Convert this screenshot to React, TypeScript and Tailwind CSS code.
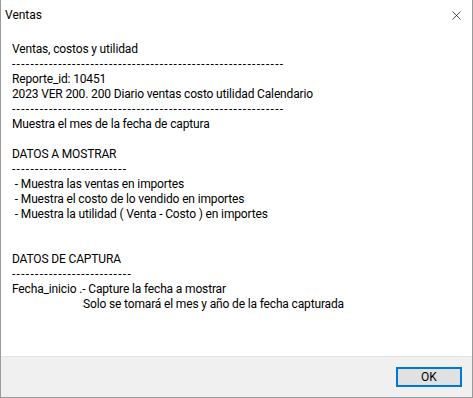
import { X } from "lucide-react";

const lines: { text: string; dash?: number; indent?: boolean }[] = [
  { text: "Ventas, costos y utilidad" },
  { text: "", dash: 59 },
  { text: "Reporte_id: 10451" },
  { text: "2023 VER 200. 200 Diario ventas costo utilidad Calendario" },
  { text: "", dash: 59 },
  { text: "Muestra el mes de la fecha de captura" },
  { text: "" },
  { text: "DATOS A MOSTRAR" },
  { text: "", dash: 25 },
  { text: " - Muestra las ventas en importes" },
  { text: " - Muestra el costo de lo vendido en importes" },
  { text: " - Muestra la utilidad ( Venta - Costo ) en importes" },
  { text: "" },
  { text: "" },
  { text: "DATOS DE CAPTURA" },
  { text: "", dash: 26 },
  { text: "Fecha_inicio .- Capture la fecha a mostrar" },
  { text: "Solo se tomará el mes y año de la fecha capturada", indent: true },
];

const App = () => {
  return (
    <div
      className="w-[473px] h-[398px] flex flex-col bg-white border-x border-b border-[#9a9a9a] text-[12px] text-black"
      style={{ fontFamily: 'Roboto, "Noto Sans", sans-serif' }}
    >
      {/* Title bar */}
      <div className="h-[30px] flex items-center justify-between pl-[4px] pr-[8px] shrink-0">
        <span className="leading-none">Ventas</span>
        <X size={15} strokeWidth={1.1} className="text-black" />
      </div>

      {/* Message */}
      <div className="flex-1 pl-[11px] pt-[12px] leading-[15px] tracking-[-0.15px]">
        {lines.map((l, i) => (
          <div
            key={i}
            className={
              "h-[15px] whitespace-pre " + (l.indent ? "pl-[71px]" : "")
            }
          >
            {l.dash ? (
              <span className="tracking-[1.3px]">{"-".repeat(l.dash)}</span>
            ) : (
              l.text
            )}
          </div>
        ))}
      </div>

      {/* Footer */}
      <div className="h-[41px] shrink-0 bg-[#f0f0f0] border-t border-[#e3e3e3] flex items-center justify-end pr-[10px]">
        <button className="w-[66px] h-[20px] border-2 border-[#0078d7] bg-[#e1e1e1] text-[12px] leading-none flex items-center justify-center">
          OK
        </button>
      </div>
    </div>
  );
};

export default App;
